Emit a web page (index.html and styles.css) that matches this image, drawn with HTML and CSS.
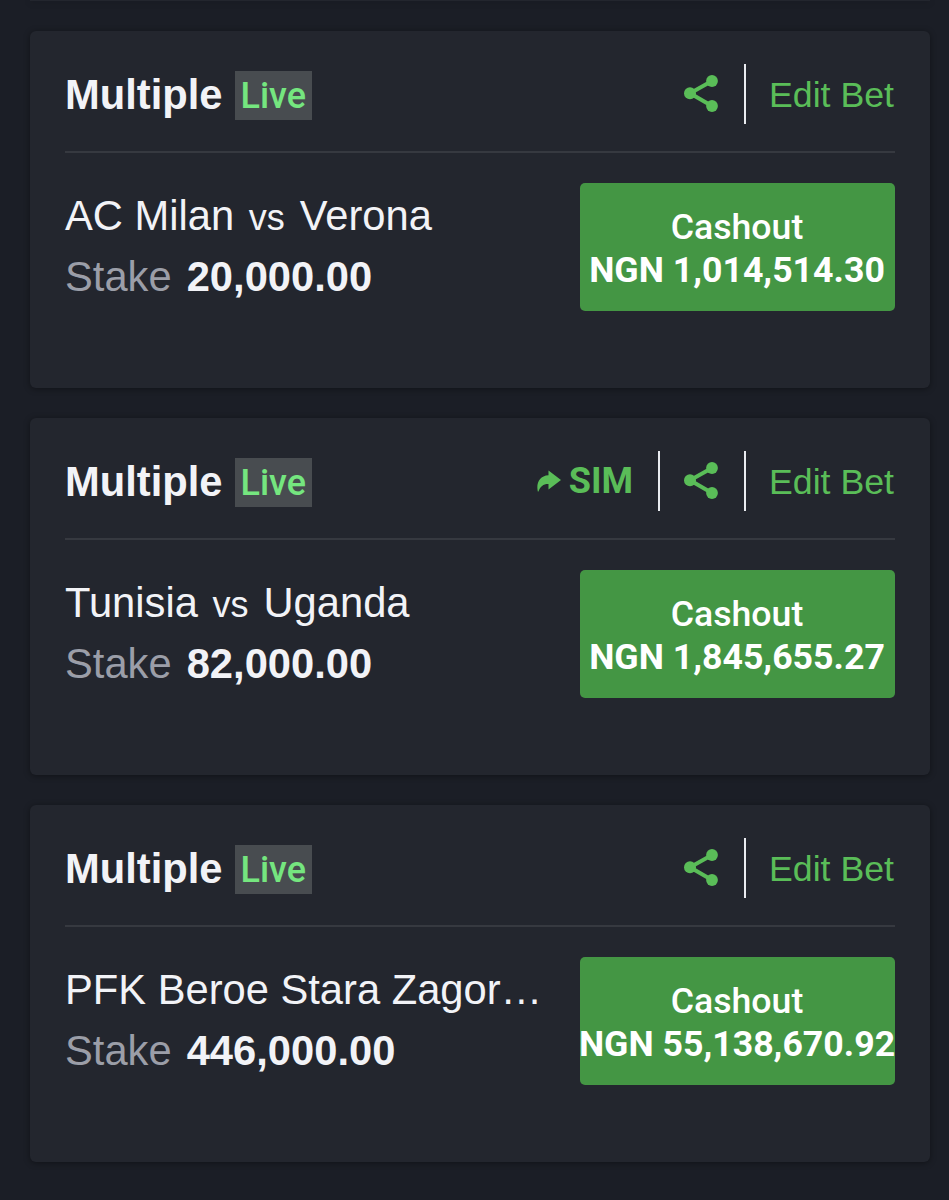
FILE: index.html
```html
<!DOCTYPE html>
<html lang="en">
<head>
  <meta charset="UTF-8" />
  <meta name="viewport" content="width=device-width, initial-scale=1.0"/>
  <title>Open Bets</title>
  <link rel="stylesheet" href="styles.css">
</head>
<body>

  <svg class="sprite">
    <symbol id="share" viewBox="0 0 34 37">
      <path d="M28 6 L6 18.3 L28 31" fill="none" stroke="currentColor" stroke-width="4"/>
      <circle cx="28" cy="6" r="5.9" fill="currentColor"/>
      <circle cx="6" cy="18.3" r="6" fill="currentColor"/>
      <circle cx="28" cy="31" r="5.9" fill="currentColor"/>
    </symbol>
    <symbol id="forward" viewBox="0 0 24 22">
      <path d="M11.5 0.5 L24 10 L11.5 19.5 V14 C6.5 13.8 3.2 16.5 1.5 21.5 H0.8 C-1 13 2.5 5.8 11.5 5.3 Z" fill="currentColor"/>
    </symbol>
  </svg>

  <div class="bets">
    <div class="card">
      <div class="card-header">
        <span class="bet-type">Multiple</span>
        <span class="live">Live</span>
        <div class="actions">
          <svg class="share-icon"><use href="#share"/></svg>
          <span class="separator"></span>
          <a class="edit">Edit Bet</a>
        </div>
      </div>
      <div class="card-body">
        <div class="info">
          <div class="match">AC Milan <span class="vs">vs</span> Verona</div>
          <div class="stake">Stake <b>20,000.00</b></div>
        </div>
        <button class="cashout"><span>Cashout</span><b>NGN 1,014,514.30</b></button>
      </div>
    </div>

    <div class="card">
      <div class="card-header">
        <span class="bet-type">Multiple</span>
        <span class="live">Live</span>
        <div class="actions">
          <svg class="forward-icon"><use href="#forward"/></svg>
          <span class="sim">SIM</span>
          <span class="separator"></span>
          <svg class="share-icon"><use href="#share"/></svg>
          <span class="separator"></span>
          <a class="edit">Edit Bet</a>
        </div>
      </div>
      <div class="card-body">
        <div class="info">
          <div class="match">Tunisia <span class="vs">vs</span> Uganda</div>
          <div class="stake">Stake <b>82,000.00</b></div>
        </div>
        <button class="cashout"><span>Cashout</span><b>NGN 1,845,655.27</b></button>
      </div>
    </div>

    <div class="card">
      <div class="card-header">
        <span class="bet-type">Multiple</span>
        <span class="live">Live</span>
        <div class="actions">
          <svg class="share-icon"><use href="#share"/></svg>
          <span class="separator"></span>
          <a class="edit">Edit Bet</a>
        </div>
      </div>
      <div class="card-body">
        <div class="info">
          <div class="match">PFK Beroe Stara Zagor…</div>
          <div class="stake">Stake <b>446,000.00</b></div>
        </div>
        <button class="cashout"><span>Cashout</span><b>NGN 55,138,670.92</b></button>
      </div>
    </div>
  </div>

</body>
</html>
```
FILE: styles.css
```css
* {
  box-sizing: border-box;
}

body {
  margin: 0;
  height: 1200px;
  overflow: hidden;
  font-family: "Liberation Sans", Arial, sans-serif;
  font-size: 41.7px;
  background: #1b1e26;
  color: #f2f3f7;
}

.sprite {
  display: none;
}

.bets {
  display: flex;
  flex-direction: column;
  gap: 30px;
  padding: 0 19px 0 30px;
}

/* bottom edge of the card scrolled off the top */
.bets::before {
  content: "";
  height: 1px;
  background: #23262e;
  box-shadow: 0 1px 6px rgba(0, 0, 0, 0.4);
}

.card {
  height: 357px;
  padding: 0 35px;
  background: #23262e;
  border-radius: 6px;
  box-shadow: 0 1px 6px rgba(0, 0, 0, 0.4);
}

.card-header {
  display: flex;
  align-items: center;
  height: 122px;
  padding: 33px 0 28px;
  border-bottom: 2px solid #363940;
}

.bet-type {
  font-weight: bold;
  line-height: 60px;
  padding-top: 2px;
}

.live {
  margin: 4px 0 0 13px;
  padding: 0 6px 0 5px;
  width: 77px;
  height: 49px;
  line-height: 51px;
  font-family: Roboto, sans-serif;
  font-size: 36px;
  font-weight: 500;
  color: #75e67f;
  background: #484c50;
}

.actions {
  display: flex;
  align-items: center;
  margin-left: auto;
  color: #5abd58;
}

.share-icon {
  width: 34px;
  height: 37px;
}

.separator {
  width: 2px;
  height: 60px;
  margin: 0 24px 0 26px;
  background: #e9ebf0;
}

.edit {
  font-size: 35.7px;
  line-height: 60px;
  margin-left: -1px;
  padding: 3px 1px 0 0;
}

.forward-icon {
  width: 24px;
  height: 22px;
  margin: 0 8px 0 0;
}

.sim {
  font-family: Roboto, sans-serif;
  font-size: 36px;
  font-weight: 700;
  margin-right: -1px;
}

.card-body {
  display: flex;
  justify-content: space-between;
  padding-top: 30px;
}

.info {
  padding-top: 3px;
  line-height: 60px;
  white-space: nowrap;
}

.vs {
  font-size: 36px;
  line-height: 1;
  margin: 0 3.5px 0 3px;
}

.stake {
  padding-top: 1px;
  color: #9b9ea8;
}

.stake b {
  color: #f2f3f7;
  margin-left: 3.5px;
}

.cashout {
  display: flex;
  flex-direction: column;
  align-items: center;
  justify-content: center;
  width: 315px;
  height: 128px;
  padding: 3px 1px 0 0;
  border: none;
  border-radius: 5px;
  background: #449644;
  color: #fff;
  font-family: Roboto, sans-serif;
  font-size: 35.7px;
  font-weight: 500;
  line-height: 42.5px;
  white-space: nowrap;
}

.cashout b {
  font-weight: 700;
}
```
